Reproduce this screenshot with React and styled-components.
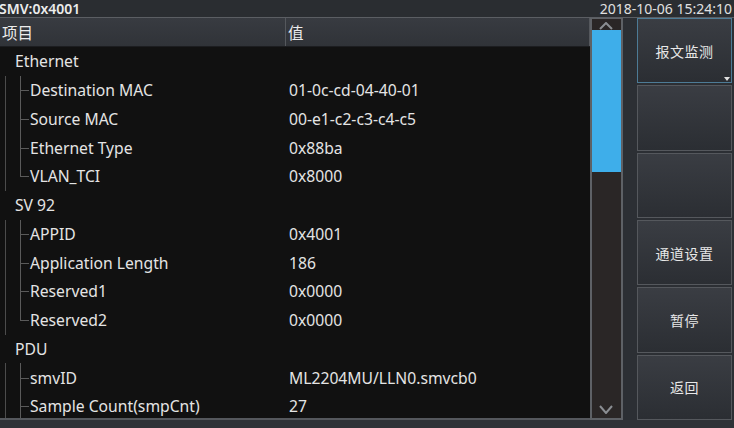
import React from 'react';
import styled, { createGlobalStyle } from 'styled-components';

const GlobalStyle = createGlobalStyle`
  html, body {
    margin: 0;
    padding: 0;
    background: #2c2f34;
    font-family: "Noto Sans", "Noto Sans CJK SC", sans-serif;
  }
  * { box-sizing: border-box; }
`;

const Screen = styled.div`
  width: 734px;
  height: 428px;
  display: flex;
  flex-direction: column;
  background: #2c2f34;
  color: #e4e4e4;
  overflow: hidden;
`;

const TopBar = styled.div`
  height: 18px;
  flex: none;
  display: flex;
  align-items: center;
  justify-content: space-between;
  padding: 0 2px 0 0;
  background: #2a2d31;
  border-bottom: 1px solid #5b5e63;
  font-size: 14px;
  line-height: 17px;
`;

const Title = styled.span`
  margin-left: -1px;
  font-weight: 600;
  color: #ececec;
`;

const Clock = styled.span`
  color: #e0e0e0;
`;

const Main = styled.div`
  flex: 1;
  display: flex;
  min-height: 0;
`;

const TablePane = styled.div`
  width: 590px;
  display: flex;
  flex-direction: column;
  background: #111111;
`;

const HeaderRow = styled.div`
  height: 29px;
  flex: none;
  display: flex;
  background: linear-gradient(#383b41, #303338);
  border-bottom: 1px solid #1c1d20;
  font-size: 15.5px;
`;

const HeaderCell = styled.div`
  width: ${p => p.$w || 'auto'};
  flex: ${p => (p.$w ? 'none' : 1)};
  display: flex;
  align-items: center;
  padding-left: 2px;
  border-right: 1px solid #55585d;
  color: #ececec;
`;

const Body = styled.div`
  flex: 1;
  overflow: hidden;
  border-bottom: 2px solid #55585d;
`;

const Row = styled.div`
  height: 28.75px;
  display: flex;
  align-items: center;
  font-size: 15.7px;
  position: relative;
`;

const NameCell = styled.div`
  width: ${p => p.$w}px;
  flex: none;
  padding-left: ${p => p.$indent}px;
  white-space: nowrap;
`;

const ValueCell = styled.div`
  padding-left: 3px;
  white-space: nowrap;
`;

const Group = styled.div`
  margin-left: 5px;
  border-left: 1px solid #4c4c4c;
`;

const ChildRow = styled(Row)`
  &::before {
    content: '';
    position: absolute;
    left: 14px;
    top: 0;
    height: ${p => (p.$last ? '50%' : '100%')};
    border-left: 1px solid #5a5a5a;
  }
  &::after {
    content: '';
    position: absolute;
    left: 14px;
    top: 50%;
    width: 9px;
    border-top: 1px solid #5a5a5a;
  }
`;

const ScrollBar = styled.div`
  width: 33px;
  display: flex;
  flex-direction: column;
  background: #2a2626;
  border: 2px solid #5e6166;
  border-top-width: 1px;
  position: relative;
`;

const Thumb = styled.div`
  height: 142px;
  margin-top: 11px;
  background: #3eaeea;
`;

const Arrow = styled.svg`
  position: absolute;
  left: 7px;
  ${p => (p.$up ? 'top: 3px;' : 'bottom: 4px;')}
`;

const Side = styled.div`
  flex: 1;
  display: flex;
  flex-direction: column;
  gap: 2px;
  padding: 0 2px 0 14px;
`;

const SoftKey = styled.div`
  flex: 1;
  display: flex;
  align-items: center;
  justify-content: center;
  position: relative;
  background: linear-gradient(#3a3d43, #2b2e33);
  border: 1px solid ${p => (p.$active ? '#4d7b96' : '#55585d')};
  font-size: 14px;
  color: #e8e8e8;
  letter-spacing: 0.5px;
`;

const Corner = styled.span`
  position: absolute;
  right: 1px;
  bottom: 1px;
  width: 0;
  height: 0;
  border-left: 3px solid transparent;
  border-right: 3px solid transparent;
  border-top: 4px solid #e0e0e0;
`;

const BottomStrip = styled.div`
  height: 8px;
  flex: none;
  background: #2f3237;
`;

const groups = [
  {
    name: 'Ethernet',
    items: [
      ['Destination MAC', '01-0c-cd-04-40-01'],
      ['Source MAC', '00-e1-c2-c3-c4-c5'],
      ['Ethernet Type', '0x88ba'],
      ['VLAN_TCI', '0x8000'],
    ],
  },
  {
    name: 'SV 92',
    items: [
      ['APPID', '0x4001'],
      ['Application Length', '186'],
      ['Reserved1', '0x0000'],
      ['Reserved2', '0x0000'],
    ],
  },
  {
    name: 'PDU',
    open: true,
    items: [
      ['smvID', 'ML2204MU/LLN0.smvcb0'],
      ['Sample Count(smpCnt)', '27'],
    ],
  },
];

const keys = [
  { label: '报文监测', active: true },
  { label: '' },
  { label: '' },
  { label: '通道设置' },
  { label: '暂停' },
  { label: '返回' },
];

export default function App() {
  return (
    <Screen>
      <GlobalStyle />
      <TopBar>
        <Title>SMV:0x4001</Title>
        <Clock>2018-10-06 15:24:10</Clock>
      </TopBar>
      <Main>
        <TablePane>
          <HeaderRow>
            <HeaderCell $w="286px">项目</HeaderCell>
            <HeaderCell>值</HeaderCell>
          </HeaderRow>
          <Body>
            {groups.map(g => (
              <React.Fragment key={g.name}>
                <Row>
                  <NameCell $indent={15} $w={280}>{g.name}</NameCell>
                </Row>
                <Group>
                  {g.items.map(([k, v], i) => (
                    <ChildRow key={k} $last={!g.open && i === g.items.length - 1}>
                      <NameCell $indent={24} $w={280}>{k}</NameCell>
                      <ValueCell>{v}</ValueCell>
                    </ChildRow>
                  ))}
                </Group>
              </React.Fragment>
            ))}
          </Body>
        </TablePane>
        <ScrollBar>
          <Thumb />
          <Arrow $up width="14" height="8" viewBox="0 0 14 8">
            <path d="M1 7 L7 1 L13 7" fill="none" stroke="#8a8d92" strokeWidth="2" />
          </Arrow>
          <Arrow width="14" height="9" viewBox="0 0 14 9">
            <path d="M1 1 L7 8 L13 1" fill="none" stroke="#8a8d92" strokeWidth="2" />
          </Arrow>
        </ScrollBar>
        <Side>
          {keys.map((k, i) => (
            <SoftKey key={i} $active={k.active}>
              {k.label}
              {k.active && <Corner />}
            </SoftKey>
          ))}
        </Side>
      </Main>
      <BottomStrip />
    </Screen>
  );
}
